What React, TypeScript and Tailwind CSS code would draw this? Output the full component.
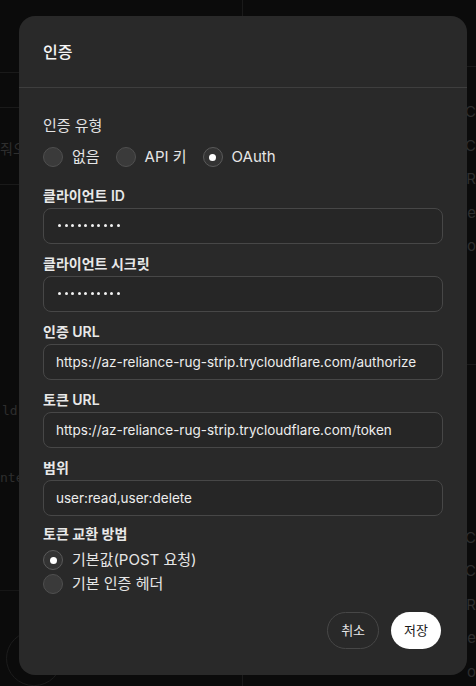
import { useState } from "react";

/* ------------------------------ helpers ------------------------------ */
function Radio({ checked, label, onSelect }: { checked: boolean; label: string; onSelect?: () => void }) {
  return (
    <label className="flex cursor-pointer items-center gap-[9px]" onClick={onSelect}>
      <span
        className={
          checked
            ? "flex h-[20px] w-[20px] items-center justify-center rounded-full border border-[#5a5a5a] bg-[#333333]"
            : "flex h-[20px] w-[20px] items-center justify-center rounded-full border border-[#4f4f4f] bg-[#3a3a3a]"
        }
      >
        {checked && <span className="h-[7px] w-[7px] rounded-full bg-white" />}
      </span>
      <span className="text-[15px] leading-[20px] text-[#e6e6e6]">{label}</span>
    </label>
  );
}

function Field({ label, value, secret }: { label: string; value: string; secret?: boolean }) {
  return (
    <div className="flex flex-col gap-[2px]">
      <div className="text-[14px] font-semibold leading-[20px] text-[#e8e8e8]">{label}</div>
      <div className="flex h-[36px] items-center rounded-[8px] border border-[#474747] bg-[#262626] px-[12px] text-[13.5px] text-[#ededed]">
        {secret ? (
          <span className="flex h-[4px] items-start gap-[3.5px] pl-[2px]">
            {Array.from({ length: value.length }).map((_, i) => (
              <span key={i} className="h-[3px] w-[3px] rounded-full bg-[#f2f2f2]" />
            ))}
          </span>
        ) : (
          value
        )}
      </div>
    </div>
  );
}

/* ------------------------------ background ------------------------------ */
function Backdrop() {
  return (
    <div className="flex h-[686px] w-full bg-[#0b0b0b] text-[#2e2e2e]">
      <div className="flex w-[243px] flex-col border-r border-[#1a1a1a]">
        <div className="h-[74px] border-b border-[#1a1a1a]" />
        <div className="h-[36px] border-b border-[#1a1a1a]" />
        <div className="flex h-[78px] items-center border-b border-[#1a1a1a] pt-[6px] text-[14px]">줘오</div>
        <div className="h-[220px]" />
        <div className="pl-[2px] font-['DejaVu_Sans_Mono',monospace] text-[13px]">ld b</div>
        <div className="mt-[48px] font-['DejaVu_Sans_Mono',monospace] text-[13px]">nte</div>
        <div className="mt-[102px] border-t border-[#161616]" />
        <div className="ml-[6px] mt-[40px] h-[56px] w-[56px] rounded-full border border-[#1c1c1c]" />
      </div>
      <div className="flex flex-1 flex-col">
        <div className="h-[67px] border-b border-[#1a1a1a]" />
        <div className="flex flex-col items-end gap-[11px] pt-[34px] text-[15px]">
          <span>C</span>
          <span>C</span>
          <span>R</span>
          <span>e</span>
          <span>o</span>
        </div>
        <div className="mt-[106px] border-b border-[#1a1a1a]" />
        <div className="flex flex-col items-end gap-[11px] pt-[162px] text-[15px]">
          <span>C</span>
          <span>C</span>
          <span>R</span>
          <span>e</span>
          <span>o</span>
        </div>
      </div>
    </div>
  );
}

/* ------------------------------ dialog ------------------------------ */
export default function App() {
  const [kind, setKind] = useState<"none" | "api" | "oauth">("oauth");
  const [method, setMethod] = useState<"post" | "basic">("post");

  return (
    <div className="relative h-[686px] w-[476px] overflow-hidden font-['Inter','Noto_Sans_CJK_KR',sans-serif]">
      <Backdrop />

      {/* overlay */}
      <div className="absolute inset-0 px-[19px] pt-[16px]">
        <div className="flex w-[448px] flex-col rounded-[16px] bg-[#292929]">
          <div className="flex h-[72px] items-center border-b border-[#3e3e3e] px-[24px]">
            <h2 className="text-[16px] font-medium text-[#f5f5f5]">인증</h2>
          </div>

          <div className="flex flex-col px-[24px] pb-[26px] pt-[28px]">
            <div className="text-[15px] leading-[20px] text-[#e3e3e3]">인증 유형</div>
            <div className="mt-[11px] flex items-center gap-[16px]">
              <Radio checked={kind === "none"} label="없음" onSelect={() => setKind("none")} />
              <Radio checked={kind === "api"} label="API 키" onSelect={() => setKind("api")} />
              <Radio checked={kind === "oauth"} label="OAuth" onSelect={() => setKind("oauth")} />
            </div>

            <div className="mt-[19px] flex flex-col gap-[10px]">
              <Field label="클라이언트 ID" value="••••••••••" secret />
              <Field label="클라이언트 시크릿" value="••••••••••" secret />
              <Field label="인증 URL" value="https://az-reliance-rug-strip.trycloudflare.com/authorize" />
              <Field label="토큰 URL" value="https://az-reliance-rug-strip.trycloudflare.com/token" />
              <Field label="범위" value="user:read,user:delete" />
            </div>

            <div className="mt-[8px] text-[14px] font-semibold leading-[20px] text-[#e8e8e8]">토큰 교환 방법</div>
            <div className="mt-[6px] flex flex-col gap-[4px]">
              <Radio checked={method === "post"} label="기본값(POST 요청)" onSelect={() => setMethod("post")} />
              <Radio checked={method === "basic"} label="기본 인증 헤더" onSelect={() => setMethod("basic")} />
            </div>

            <div className="mt-[18px] flex justify-end gap-[12px]">
              <button className="h-[37px] rounded-full border border-[#474747] px-[13px] text-[13px] text-[#e6e6e6]">
                취소
              </button>
              <button className="mr-[2px] h-[37px] rounded-full bg-white px-[13px] text-[13px] text-[#1a1a1a]">
                저장
              </button>
            </div>
          </div>
        </div>
      </div>
    </div>
  );
}
